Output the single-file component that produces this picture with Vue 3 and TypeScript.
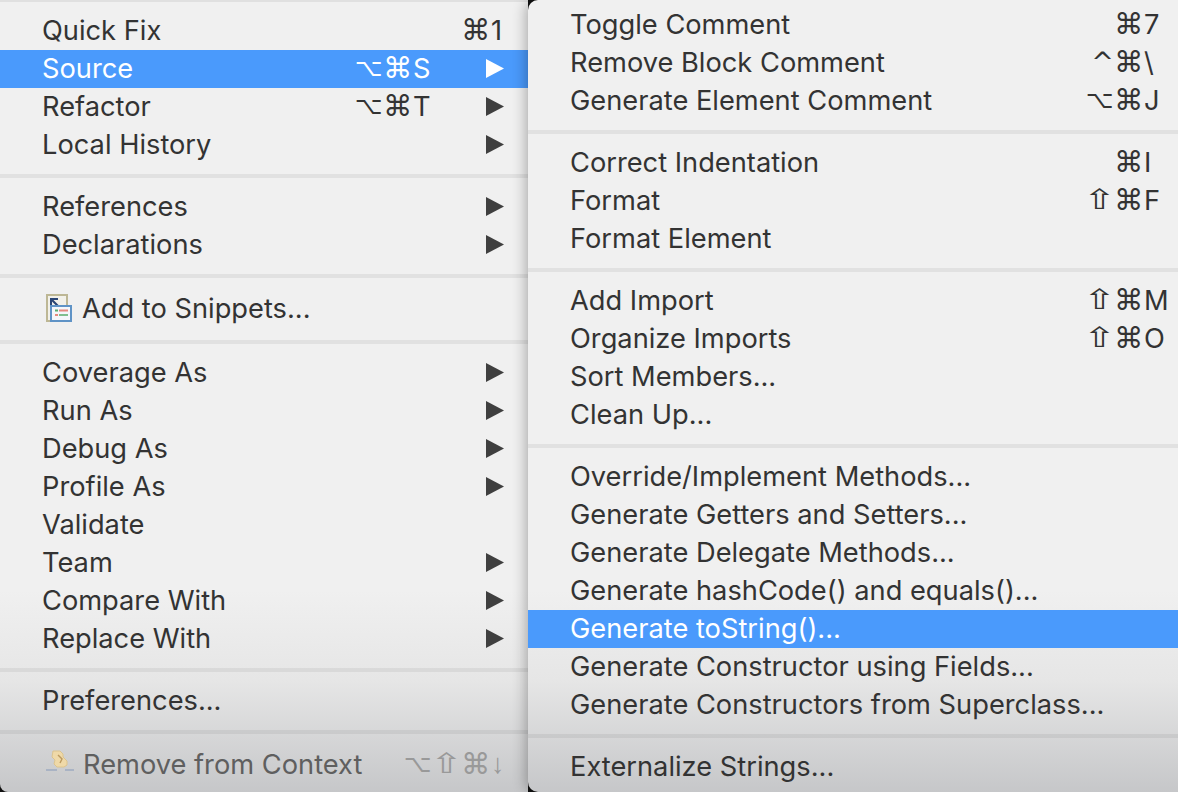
<template>
  <div class="desk">
    <div class="menu left">
      <template v-for="(sec, i) in leftMenu" :key="i">
        <div v-if="i > 0" class="sep"></div>
        <div
          v-for="item in sec"
          :key="item.label"
          class="row"
          :class="{ active: item.active, dim: item.dim, tall: item.icon }"
        >
          <svg v-if="item.icon === 'snippet'" class="ico" viewBox="0 0 26 28">
            <rect x="1" y="1" width="20" height="26" fill="#f2f1ea" stroke="#bdb795" stroke-width="2" />
            <path d="M4 4v8h2V7.5l5 5 1.5-1.5-5-5H12V4z" fill="#2b4675" />
            <rect x="5" y="12" width="20" height="15" fill="#f4f7fb" stroke="#5f93c6" stroke-width="2" />
            <rect x="9" y="15.5" width="3" height="2" fill="#58ad72" />
            <rect x="13" y="15.5" width="9" height="2" fill="#e58a80" />
            <rect x="9" y="20" width="3" height="2" fill="#e58a80" />
            <rect x="13" y="20" width="9" height="2" fill="#7fbf8f" />
          </svg>
          <svg v-if="item.icon === 'remove'" class="ico wide" viewBox="0 0 28 28">
            <path d="M7 1h7l3 3v3l4 4v4l-3 2h-7l-3-3 1-4-3-3z" fill="#efd9a8" stroke="#dcc48e" stroke-width="1" />
            <path d="M12 5l4 4-2 4" fill="none" stroke="#bc9a60" stroke-width="1.4" />
            <rect x="0" y="19" width="11" height="2" fill="#a9b3c4" />
            <rect x="19" y="19" width="9" height="2" fill="#a9b3c4" />
          </svg>
          <span class="label" :class="{ iconed: item.icon }">{{ item.label }}</span>
          <span v-if="item.mods || item.key" class="short">
            <span v-for="(m, n) in item.mods" :key="n" class="mod" :class="modClass[m]">{{ m }}</span>
            <span class="key" :class="{ down: item.key === '↓' }">{{ item.key }}</span>
          </span>
          <span v-if="item.arrow" class="arrow">
            <svg width="18" height="19" viewBox="0 0 18 19"><polygon points="0,0 18,9.5 0,19" /></svg>
          </span>
        </div>
      </template>
    </div>
    <div class="menu right">
      <template v-for="(sec, i) in rightMenu" :key="i">
        <div v-if="i > 0" class="sep"></div>
        <div v-for="item in sec" :key="item.label" class="row" :class="{ active: item.active }">
          <span class="label">{{ item.label }}</span>
          <span v-if="item.mods || item.key" class="short">
            <span v-for="(m, n) in item.mods" :key="n" class="mod" :class="modClass[m]">{{ m }}</span>
            <span class="key">{{ item.key }}</span>
          </span>
        </div>
      </template>
    </div>
  </div>
</template>

<script setup lang="ts">
interface Item {
  label: string
  mods?: string
  key?: string
  arrow?: boolean
  active?: boolean
  dim?: boolean
  icon?: string
}

const modClass: Record<string, string> = {
  '⌘': 'cmd',
  '⌥': 'opt',
  '⇧': 'shift',
  '^': 'ctrl',
}

const leftMenu: Item[][] = [
  [
    { label: 'Quick Fix', mods: '⌘', key: '1' },
    { label: 'Source', mods: '⌥⌘', key: 'S', arrow: true, active: true },
    { label: 'Refactor', mods: '⌥⌘', key: 'T', arrow: true },
    { label: 'Local History', arrow: true },
  ],
  [
    { label: 'References', arrow: true },
    { label: 'Declarations', arrow: true },
  ],
  [{ label: 'Add to Snippets...', icon: 'snippet' }],
  [
    { label: 'Coverage As', arrow: true },
    { label: 'Run As', arrow: true },
    { label: 'Debug As', arrow: true },
    { label: 'Profile As', arrow: true },
    { label: 'Validate' },
    { label: 'Team', arrow: true },
    { label: 'Compare With', arrow: true },
    { label: 'Replace With', arrow: true },
  ],
  [{ label: 'Preferences...' }],
  [{ label: 'Remove from Context', mods: '⌥⇧⌘', key: '↓', dim: true, icon: 'remove' }],
]

const rightMenu: Item[][] = [
  [
    { label: 'Toggle Comment', mods: '⌘', key: '7' },
    { label: 'Remove Block Comment', mods: '^⌘', key: '\\' },
    { label: 'Generate Element Comment', mods: '⌥⌘', key: 'J' },
  ],
  [
    { label: 'Correct Indentation', mods: '⌘', key: 'I' },
    { label: 'Format', mods: '⇧⌘', key: 'F' },
    { label: 'Format Element' },
  ],
  [
    { label: 'Add Import', mods: '⇧⌘', key: 'M' },
    { label: 'Organize Imports', mods: '⇧⌘', key: 'O' },
    { label: 'Sort Members...' },
    { label: 'Clean Up...' },
  ],
  [
    { label: 'Override/Implement Methods...' },
    { label: 'Generate Getters and Setters...' },
    { label: 'Generate Delegate Methods...' },
    { label: 'Generate hashCode() and equals()...' },
    { label: 'Generate toString()...', active: true },
    { label: 'Generate Constructor using Fields...' },
    { label: 'Generate Constructors from Superclass...' },
  ],
  [{ label: 'Externalize Strings...' }],
]
</script>

<style scoped>
.desk {
  display: flex;
  width: 1178px;
  height: 792px;
  overflow: hidden;
  background: #111;
  font-family: Inter, "Liberation Sans", sans-serif;
  font-size: 27.25px;
  color: #333;
}

.menu {
  height: 792px;
  box-sizing: border-box;
  background: linear-gradient(to bottom, #f0f0f0 0, #f0f0f0 590px, #e6e6e6 680px, #c6c7c9 792px);
}

.left {
  width: 528px;
  padding-top: 12px;
  border-radius: 0 0 0 8px;
  box-shadow: inset 0 2px 0 #e0e0e0;
}

.right {
  position: relative;
  z-index: 1;
  width: 650px;
  padding-top: 6px;
  border-radius: 10px 0 0 10px;
  box-shadow: -2px 0 14px rgba(0, 0, 0, 0.3);
}

.sep {
  height: 4px;
  margin: 10px 0;
  background: rgba(0, 0, 0, 0.06);
}

.row {
  display: flex;
  align-items: center;
  height: 38px;
  box-sizing: border-box;
  padding: 0 13px 2px 42px;
  white-space: nowrap;
}

.right .row {
  padding-right: 10px;
}

.tall {
  height: 42px;
}

.active {
  background: #4a9afc;
  color: #fff;
}

.dim {
  color: #5f5f5f;
}

.dim .short {
  color: #999;
}

.label {
  flex: 1;
}

.iconed {
  margin-left: 10px;
}

.ico {
  width: 26px;
  height: 28px;
  flex: none;
  margin-left: 4px;
}

.ico.wide {
  width: 28px;
}

.wide + .iconed {
  margin-left: 9px;
}

.short {
  display: flex;
  align-items: center;
}

.mod {
  width: 29px;
  box-sizing: border-box;
  text-align: center;
  font-family: "DejaVu Sans", sans-serif;
  line-height: 32px;
}

.cmd {
  font-size: 29px;
}

.opt {
  font-size: 24px;
}

.shift {
  font-size: 28px;
  transform: scaleX(1.4);
}

.ctrl {
  padding-left: 6px;
  font-size: 27px;
}

.key {
  width: 24px;
  margin-left: 1px;
}

.down {
  font-family: "Liberation Sans", sans-serif;
}

.arrow {
  display: flex;
  justify-content: flex-end;
  width: 78px;
  box-sizing: border-box;
  padding-right: 11px;
  fill: #3f3f3f;
}

.active .arrow {
  fill: #fff;
}
</style>

<style>
body {
  background: #111;
}
</style>
